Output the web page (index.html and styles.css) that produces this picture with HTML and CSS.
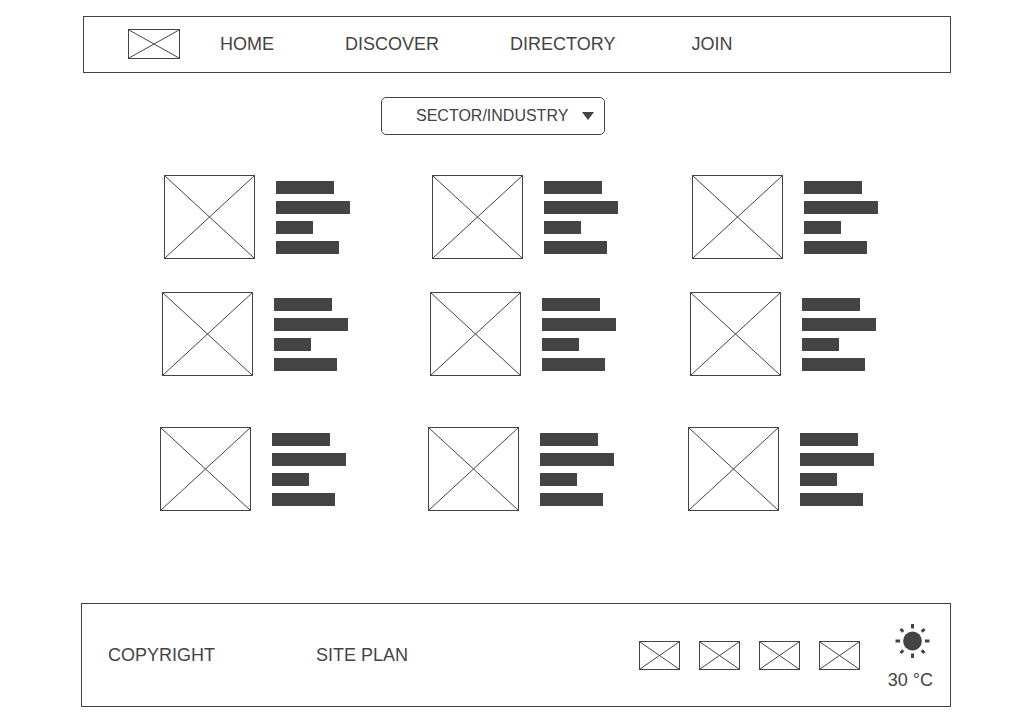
FILE: index.html
```html
<!DOCTYPE html>
<html lang="en">
<head>
<meta charset="utf-8">
<meta name="viewport" content="width=device-width, initial-scale=1">
<title>Directory</title>
<link rel="stylesheet" href="styles.css">
</head>
<body>
<svg class="defs" aria-hidden="true">
  <symbol id="cross" viewBox="0 0 100 100" preserveAspectRatio="none">
    <path d="M0 0L100 100M100 0L0 100" fill="none" stroke="#444" vector-effect="non-scaling-stroke"/>
  </symbol>
</svg>

<header class="header">
  <a class="logo" href="#" aria-label="Logo"><svg class="image"><use href="#cross"/></svg></a>
  <nav class="nav">
    <a href="#">HOME</a>
    <a href="#">DISCOVER</a>
    <a href="#">DIRECTORY</a>
    <a class="nav-join" href="#">JOIN</a>
  </nav>
</header>

<main class="main">
  <div class="filter">
    <select class="filter-select" aria-label="Sector or industry">
      <option>SECTOR/INDUSTRY</option>
    </select>
    <svg class="filter-arrow" viewBox="0 0 12 8" aria-hidden="true"><path d="M0 0H12L6 8Z" fill="#444"/></svg>
  </div>

  <section class="row row-first">
    <article class="card"><svg class="image thumb"><use href="#cross"/></svg><div class="lines"><i class="bar bar-a"></i><i class="bar bar-b"></i><i class="bar bar-c"></i><i class="bar bar-d"></i></div></article>
    <article class="card"><svg class="image thumb"><use href="#cross"/></svg><div class="lines"><i class="bar bar-a"></i><i class="bar bar-b"></i><i class="bar bar-c"></i><i class="bar bar-d"></i></div></article>
    <article class="card"><svg class="image thumb"><use href="#cross"/></svg><div class="lines"><i class="bar bar-a"></i><i class="bar bar-b"></i><i class="bar bar-c"></i><i class="bar bar-d"></i></div></article>
  </section>
  <section class="row row-second">
    <article class="card"><svg class="image thumb"><use href="#cross"/></svg><div class="lines"><i class="bar bar-a"></i><i class="bar bar-b"></i><i class="bar bar-c"></i><i class="bar bar-d"></i></div></article>
    <article class="card"><svg class="image thumb"><use href="#cross"/></svg><div class="lines"><i class="bar bar-a"></i><i class="bar bar-b"></i><i class="bar bar-c"></i><i class="bar bar-d"></i></div></article>
    <article class="card"><svg class="image thumb"><use href="#cross"/></svg><div class="lines"><i class="bar bar-a"></i><i class="bar bar-b"></i><i class="bar bar-c"></i><i class="bar bar-d"></i></div></article>
  </section>
  <section class="row row-third">
    <article class="card"><svg class="image thumb"><use href="#cross"/></svg><div class="lines"><i class="bar bar-a"></i><i class="bar bar-b"></i><i class="bar bar-c"></i><i class="bar bar-d"></i></div></article>
    <article class="card"><svg class="image thumb"><use href="#cross"/></svg><div class="lines"><i class="bar bar-a"></i><i class="bar bar-b"></i><i class="bar bar-c"></i><i class="bar bar-d"></i></div></article>
    <article class="card"><svg class="image thumb"><use href="#cross"/></svg><div class="lines"><i class="bar bar-a"></i><i class="bar bar-b"></i><i class="bar bar-c"></i><i class="bar bar-d"></i></div></article>
  </section>
</main>

<footer class="footer">
  <div class="footer-links">
    <a href="#">COPYRIGHT</a>
    <a href="#">SITE PLAN</a>
  </div>
  <div class="social">
    <a href="#" aria-label="Social link 1"><svg class="image"><use href="#cross"/></svg></a>
    <a href="#" aria-label="Social link 2"><svg class="image"><use href="#cross"/></svg></a>
    <a href="#" aria-label="Social link 3"><svg class="image"><use href="#cross"/></svg></a>
    <a href="#" aria-label="Social link 4"><svg class="image"><use href="#cross"/></svg></a>
  </div>
  <div class="weather">
    <svg class="sun" viewBox="-19 -17 38 34" aria-hidden="true">
      <circle cx=".5" r="9.4" fill="#444"/>
      <path transform="translate(.5 0)" d="M0-17V-12.4M0 17V12.4M-17 0H-12.4M17 0H12.4M-12-12L-9.2-9.2M12-12L9.2-9.2M-12 12L-9.2 9.2M12 12L9.2 9.2" stroke="#444" stroke-width="3"/>
    </svg>
    <span>30 °C</span>
  </div>
</footer>
</body>
</html>
```
FILE: styles.css
```css
* {
  box-sizing: border-box;
}

body {
  display: flex;
  flex-direction: column;
  min-height: 100vh;
  margin: 0;
  padding: 16px 73px 21px 81px;
  background: #fff;
  color: #444;
  font: 18px/20px "Liberation Sans", Arial, sans-serif;
}

a {
  color: inherit;
  text-decoration: none;
}

.defs {
  position: absolute;
  width: 0;
  height: 0;
}

.image {
  display: block;
  width: 100%;
  height: 100%;
  border: 1px solid #444;
}

.header {
  display: flex;
  gap: 40px;
  margin-left: 2px;
  padding: 12px 44px 13px;
  border: 1px solid #444;
}

.logo {
  width: 52px;
  height: 30px;
}

.nav {
  display: flex;
  gap: 71px;
  padding-top: 5px;
}

.nav-join {
  margin-left: 5px;
}

.main {
  flex: 1;
  padding: 24px 0 92px 79px;
}

.filter {
  position: relative;
  width: 224px;
  margin: 0 auto 40px 221px;
}

.filter-select {
  display: block;
  appearance: none;
  width: 100%;
  height: 38px;
  padding: 0 34px;
  border: 1px solid #444;
  border-radius: 5px;
  background: #fff;
  color: inherit;
  font: 16px/20px "Liberation Sans", Arial, sans-serif;
}

.filter-arrow {
  position: absolute;
  top: 15px;
  right: 11px;
  width: 12px;
  height: 8px;
  pointer-events: none;
}

.row {
  display: grid;
  grid-template-columns: 268fr 260fr 259fr;
}

.row-first {
  margin-left: 4px;
}

.row-second {
  margin: 33px 2px 51px;
}

.row-third {
  margin-right: 4px;
}

.card {
  display: flex;
  gap: 21px;
}

.thumb {
  width: 91px;
  height: 84px;
}

.lines {
  display: flex;
  flex-direction: column;
  gap: 7px;
  padding-top: 6px;
}

.bar {
  height: 13px;
  background: #444;
}

.bar-a {
  width: 58px;
}

.bar-b {
  width: 74px;
}

.bar-c {
  width: 37px;
}

.bar-d {
  width: 63px;
}

.footer {
  display: flex;
  align-items: center;
  padding: 20px 17px 16px 26px;
  border: 1px solid #444;
}

.footer-links {
  display: flex;
  gap: 101px;
  margin-right: auto;
  padding-bottom: 4px;
}

.social {
  display: flex;
  gap: 19px;
  margin-right: 28px;
  padding-bottom: 4px;
}

.social a {
  width: 41px;
  height: 29px;
}

.weather {
  display: flex;
  flex-direction: column;
  align-items: flex-end;
  gap: 12px;
}

.sun {
  width: 38px;
  height: 34px;
  margin-right: 2px;
}
```
